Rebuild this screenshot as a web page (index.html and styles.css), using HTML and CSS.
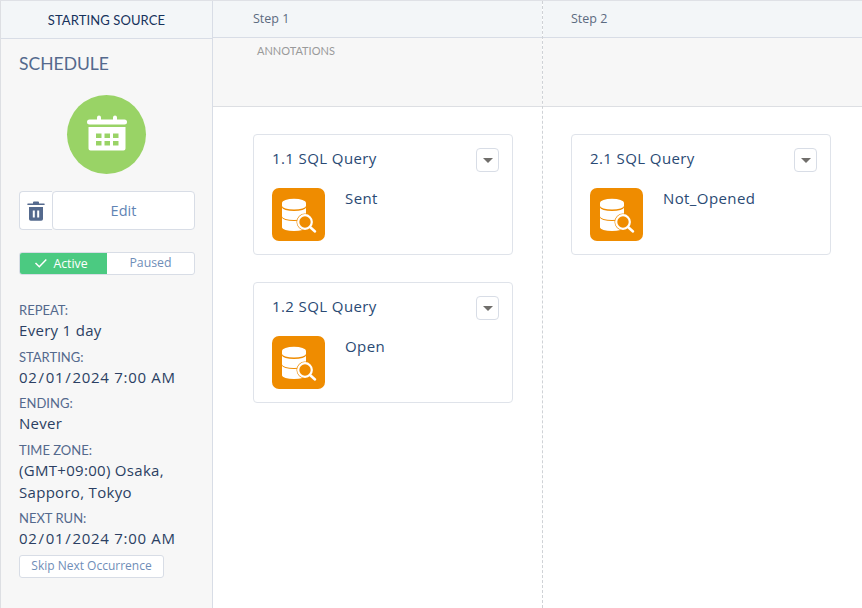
FILE: index.html
```html
<!DOCTYPE html>
<html lang="en">
<head>
<meta charset="utf-8">
<title>Schedule</title>
<link rel="stylesheet" href="styles.css">
</head>
<body>
<div class="app">
  <aside class="side">
    <div class="side-head">STARTING SOURCE</div>
    <div class="side-body">
      <h2 class="side-title">SCHEDULE</h2>
      <div class="badge">
        <svg width="42" height="42" viewBox="0 0 42 42" fill="#fff">
          <path d="M3.500 5.500h7.500V3.600a2 2 0 0 1 4 0v1.900h12V3.600a2 2 0 0 1 4 0v1.900h7.500a2.500 2.500 0 0 1 0 5h-35a2.500 2.500 0 0 1 0-5z"/>
          <path fill-rule="evenodd" d="M2.500 13h37v21.500a2 2 0 0 1-2 2h-33a2 2 0 0 1-2-2zM10 19.500V24h5.500v-4.500zM18.500 19.500V24H24v-4.500zM27 19.500V24h5.500v-4.500zM10 27v4.500h5.500V27zM18.500 27v4.500H24V27zM27 27v4.500h5.500V27z"/>
        </svg>
      </div>
      <div class="actions">
        <button class="btn btn-icon" aria-label="Delete">
          <svg width="18" height="20" viewBox="0 0 18 20" fill="#54698d">
            <path d="M7 .5h4a1 1 0 0 1 1 1V2.500h5a.8.800 0 0 1 0 1.600H1a.8.800 0 0 1 0-1.600h5V1.500a1 1 0 0 1 1-1z"/>
            <path fill-rule="evenodd" d="M2 6h14v12a1.800 1.800 0 0 1-1.800 1.800H3.800A1.800 1.800 0 0 1 2 18zM5.800 9.500v7h2v-7zM10.200 9.500v7h2v-7z"/>
          </svg>
        </button>
        <button class="btn btn-edit">Edit</button>
      </div>
      <div class="toggle">
        <div class="toggle-on">
          <svg width="14" height="11" viewBox="0 0 14 11" fill="none" stroke="#fff" stroke-width="1.500"><path d="M1.500 5l3.800 3.800 7-7.300"/></svg>
          <span>Active</span>
        </div>
        <div class="toggle-off">Paused</div>
      </div>
      <dl class="info">
        <dt class="first">REPEAT:</dt><dd>Every 1 day</dd>
        <dt>STARTING:</dt><dd class="date">02<span class="sl">/</span>01<span class="sl">/</span>2024 7:00 AM</dd>
        <dt>ENDING:</dt><dd>Never</dd>
        <dt>TIME ZONE:</dt><dd>(GMT+09:00) Osaka, Sapporo, Tokyo</dd>
        <dt>NEXT RUN:</dt><dd class="date">02<span class="sl">/</span>01<span class="sl">/</span>2024 7:00 AM</dd>
      </dl>
      <button class="btn btn-skip">Skip Next Occurrence</button>
    </div>
  </aside>
  <main class="main">
    <section class="col col-one">
      <div class="col-head">Step 1</div>
      <div class="annot"><span class="annot-label">ANNOTATIONS</span></div>
      <div class="col-body">
        <article class="card">
          <div class="card-top"><span class="card-title">1.1 SQL Query</span><button class="menu" aria-label="Menu"><i class="caret"></i></button></div>
          <div class="card-row">
            <svg class="query" viewBox="0 0 53 53"><use href="#q"/></svg>
            <span class="card-name">Sent</span>
          </div>
        </article>
        <article class="card">
          <div class="card-top"><span class="card-title">1.2 SQL Query</span><button class="menu" aria-label="Menu"><i class="caret"></i></button></div>
          <div class="card-row">
            <svg class="query" viewBox="0 0 53 53"><use href="#q"/></svg>
            <span class="card-name">Open</span>
          </div>
        </article>
      </div>
    </section>
    <section class="col col-two">
      <div class="col-head">Step 2</div>
      <div class="annot"></div>
      <div class="col-body">
        <article class="card">
          <div class="card-top"><span class="card-title">2.1 SQL Query</span><button class="menu" aria-label="Menu"><i class="caret"></i></button></div>
          <div class="card-row">
            <svg class="query" viewBox="0 0 53 53"><use href="#q"/></svg>
            <span class="card-name">Not_Opened</span>
          </div>
        </article>
      </div>
    </section>
  </main>
</div>
<svg class="defs" width="0" height="0">
  <symbol id="q" viewBox="0 0 53 53">
    <rect width="53" height="53" rx="7" fill="#ef8c00"/>
    <path d="M10 15a12 4.200 0 0 1 24 0v3a12 3.500 0 0 1-24 0z" fill="#fff"/>
    <path d="M10 19.500a12 3.500 0 0 0 24 0v9a12 3.500 0 0 1-24 0z" fill="#fff"/>
    <path d="M10 29.500a12 3.500 0 0 0 24 0v10a12 3.500 0 0 1-24 0z" fill="#fff"/>
    <circle cx="33" cy="34" r="8.500" fill="#ef8c00"/>
    <circle cx="33" cy="34" r="6.800" fill="#ef8c00" stroke="#fff" stroke-width="2.200"/>
    <path d="M38 39l5 4.500" stroke="#fff" stroke-width="2.500" stroke-linecap="round"/>
  </symbol>
</svg>
</body>
</html>
```
FILE: styles.css
```css
* { box-sizing: border-box; }
html, body { margin: 0; height: 100%; overflow: hidden; }
body { background: #fff; font-family: "Open Sans", "Liberation Sans", sans-serif; color: #16325c; }
h2, dl, dd { margin: 0; }
button { font-family: inherit; cursor: pointer; background: #fff; padding: 0; }
.defs { position: absolute; }
.app { display: flex; height: 608px; border-top: 1px solid #dfe1e6; }
.side { width: 213px; flex: none; background: #f7f7f7; border-left: 1px solid #dddfe3; border-right: 1px solid #d8dde6; display: flex; flex-direction: column; }
.side-head { height: 38px; background: #f3f6f8; border-bottom: 1px solid #d8dde6; display: flex; align-items: center; justify-content: center; font-family: Lato, sans-serif; font-size: 13px; color: #16325c; letter-spacing: .1px; }
.side-body { padding: 14px 17px 0 18px; display: flex; flex-direction: column; align-items: flex-start; }
.side-title { font-family: Lato, sans-serif; font-weight: 400; font-size: 17.500px; line-height: 22px; color: #54698d; }
.badge { width: 79px; height: 79px; border-radius: 50%; background: #99d366; align-self: center; margin: 20px 0 0 -1px; display: flex; align-items: center; justify-content: center; }
.actions { display: flex; margin-top: 17px; width: 176px; height: 39px; }
.btn { border: 1px solid #d8dde6; border-radius: 4px; color: #5f84b4; }
.btn-icon { width: 33px; border-right: 0; border-radius: 4px 0 0 4px; display: flex; align-items: center; justify-content: center; }
.btn-edit { flex: 1; font-size: 14.500px; }
.toggle { display: flex; width: 176px; height: 23px; margin-top: 22px; border: 1px solid #d8dde6; border-radius: 3px; background: #fff; font-size: 12.300px; overflow: hidden; }
.toggle-on { width: 87px; background: #4bca81; color: #fff; display: flex; align-items: center; justify-content: center; gap: 5px; padding-right: 5px; }
.toggle-off { flex: 1; text-align: center; line-height: 20px; color: #6f8eb8; }
.info { margin-top: 27px; width: 176px; }
.info dt { font-family: Lato, sans-serif; font-size: 13px; line-height: 16px; color: #54698d; margin-top: 7.500px; }
.info dt.first { margin-top: 0; }
.info dd { font-size: 15px; line-height: 22px; padding-top: 1px; letter-spacing: .3px; color: #2b3f63; }
.info dd.date { letter-spacing: .7px; }
.sl { margin: 0 1px; }
.btn-skip { margin-top: 6px; width: 145px; height: 23px; padding-bottom: 2px; font-size: 12px; border-radius: 3px; color: #6f8eb8; }
.main { flex: 1; display: flex; min-width: 0; }
.col { display: flex; flex-direction: column; }
.col-one { width: 330px; border-right: 1px dashed #cfd2d6; }
.col-two { flex: 1; }
.col-head { height: 37px; background: #f3f6f8; border-bottom: 1px solid #d8dde6; padding-left: 40px; font-size: 12.500px; line-height: 35px; color: #5c6b80; }
.col-two .col-head { padding-left: 28px; }
.annot { height: 69px; background: #f7f7f7; border-bottom: 1px solid #dddfe3; padding: 6px 0 0 44px; }
.annot-label { font-family: Lato, sans-serif; font-size: 11px; line-height: 14px; color: #9a9a9a; display: block; }
.col-body { padding: 27px 0 0 40px; display: flex; flex-direction: column; gap: 27px; }
.col-two .col-body { padding-left: 28px; }
.card { width: 260px; height: 121px; border: 1px solid #dfe3ea; border-radius: 4px; background: #fff; padding: 13px 13px 0 18px; }
.card-top { display: flex; justify-content: space-between; align-items: flex-start; height: 40px; }
.card-title { font-size: 15px; line-height: 20px; letter-spacing: .4px; color: #2a4a74; }
.menu { width: 23px; height: 24px; border: 1px solid #d8dde6; border-radius: 4px; display: flex; align-items: center; justify-content: center; }
.caret { border: 5px solid transparent; border-top: 5px solid #706e6b; border-bottom: 0; width: 0; height: 0; }
.card-row { display: flex; align-items: flex-start; gap: 20px; }
.query { width: 53px; height: 53px; flex: none; }
.card-name { font-size: 15px; line-height: 20px; letter-spacing: .4px; color: #2a4a74; }
```
